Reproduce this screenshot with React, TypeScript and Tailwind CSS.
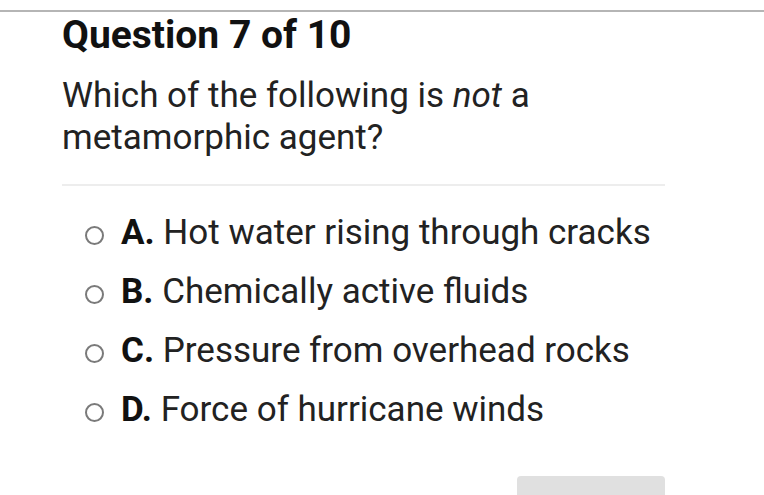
export default function App() {
  const options = [
    { letter: 'A.', text: 'Hot water rising through cracks' },
    { letter: 'B.', text: 'Chemically active fluids' },
    { letter: 'C.', text: 'Pressure from overhead rocks' },
    { letter: 'D.', text: 'Force of hurricane winds' },
  ];

  return (
    <div className="w-[764px] h-[495px] bg-white overflow-hidden" style={{ fontFamily: 'Roboto, "Noto Sans", sans-serif' }}>
      <div className="h-[10px]" />
      <div className="h-[2px] bg-[#b5b5b5]" />
      <div className="pl-[62px] w-[665px]">
        <h1 className="text-[39px] leading-[46px] font-bold text-[#111] tracking-[0px]">Question 7 of 10</h1>
        <p className="mt-[17px] text-[35px] leading-[42px] text-[#222]">
          Which of the following is <i>not</i> a<br />metamorphic agent?
        </p>
        <div className="mt-[25px] h-[2px] bg-[#ededed]" />
        <div className="mt-[17px] pl-[23px] flex flex-col">
          {options.map((o) => (
            <div key={o.letter} className="flex items-center h-[59px]">
              <span className="shrink-0 mt-[6px] w-[19px] h-[19px] rounded-full border-[2px] border-[#7a7a7a]" />
              <span className="ml-[17px] whitespace-nowrap text-[35px] leading-[59px] text-[#222]">
                <b className="text-[#111]">{o.letter}</b> {o.text}
              </span>
            </div>
          ))}
        </div>
        <div className="flex justify-end mt-[37px]">
          <div className="w-[148px] h-[30px] bg-[#e0e0e0] rounded-t-[4px]" />
        </div>
      </div>
    </div>
  );
}
